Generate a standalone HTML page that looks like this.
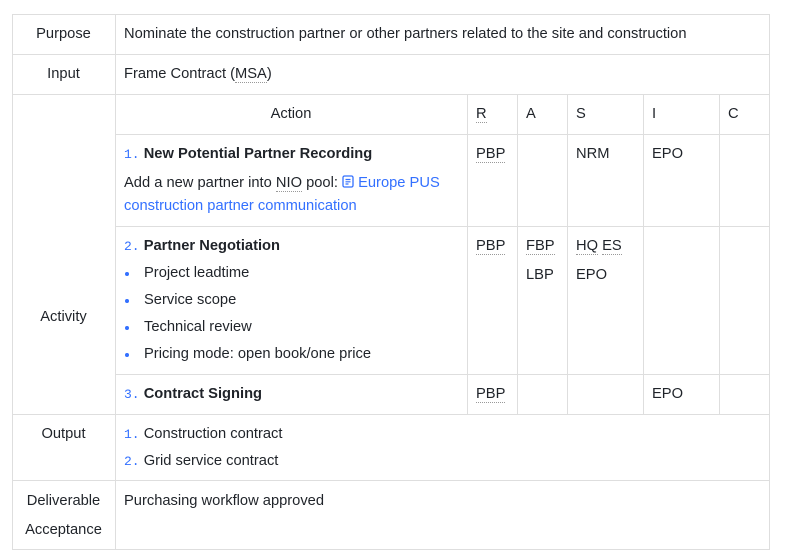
<!DOCTYPE html>
<html><head><meta charset="utf-8"><style>
body{margin:0;width:785px;height:558px;background:#fff;position:relative;overflow:hidden;font-family:"Liberation Sans",Arial,sans-serif;font-size:14.7px;color:#1f2329}
.h{position:absolute;height:1px;background:#dedede}
.v{position:absolute;width:1px;background:#dedede}
.t{position:absolute;white-space:nowrap;line-height:20px;margin-top:1px}
.c{text-align:center}
b{font-weight:bold}
.n{color:#3370ff;font-family:"Liberation Mono",monospace;font-size:13px}
.u{border-bottom:1px dotted #999}
.dot{position:absolute;width:4px;height:4px;border-radius:2px;background:#3370ff}
a{color:#3370ff;text-decoration:none}
</style></head><body>
<div class="h" style="left:12px;width:758px;top:14px"></div>
<div class="h" style="left:12px;width:758px;top:54px"></div>
<div class="h" style="left:12px;width:758px;top:94px"></div>
<div class="h" style="left:115px;width:655px;top:134px"></div>
<div class="h" style="left:115px;width:655px;top:226px"></div>
<div class="h" style="left:115px;width:655px;top:374px"></div>
<div class="h" style="left:12px;width:758px;top:414px"></div>
<div class="h" style="left:12px;width:758px;top:480px"></div>
<div class="h" style="left:12px;width:758px;top:549px"></div>
<div class="v" style="left:12px;top:14px;height:536px"></div>
<div class="v" style="left:115px;top:14px;height:536px"></div>
<div class="v" style="left:769px;top:14px;height:536px"></div>
<div class="v" style="left:467px;top:94px;height:320px"></div>
<div class="v" style="left:517px;top:94px;height:320px"></div>
<div class="v" style="left:567px;top:94px;height:320px"></div>
<div class="v" style="left:643px;top:94px;height:320px"></div>
<div class="v" style="left:719px;top:94px;height:320px"></div>

<div class="t c" style="left:12px;width:103px;top:23px">Purpose</div>
<div class="t" style="left:124px;top:23px">Nominate the construction partner or other partners related to the site and construction</div>
<div class="t c" style="left:12px;width:103px;top:63px">Input</div>
<div class="t" style="left:124px;top:63px">Frame Contract (<span class="u">MSA</span>)</div>
<div class="t c" style="left:115px;width:352px;top:103px">Action</div>
<div class="t" style="left:476px;top:103px"><span class="u">R</span></div>
<div class="t" style="left:526px;top:103px">A</div>
<div class="t" style="left:576px;top:103px">S</div>
<div class="t" style="left:652px;top:103px">I</div>
<div class="t" style="left:728px;top:103px">C</div>

<div class="t" style="left:124px;top:143px"><span class="n">1.</span> <b>New Potential Partner Recording</b></div>
<div class="t" style="left:124px;top:172px">Add a new partner into <span class="u">NIO</span> pool: <a><svg width="12" height="13" viewBox="0 0 12 13" style="vertical-align:-1px"><rect x="1" y="1" width="10" height="11" rx="1.5" fill="none" stroke="#3370ff" stroke-width="1.3"/><path d="M3.5 4.5h5M3.5 6.8h5M3.5 9h3" stroke="#3370ff" stroke-width="1.2"/></svg> Europe PUS</a></div>
<div class="t" style="left:124px;top:195px"><a>construction partner communication</a></div>
<div class="t" style="left:476px;top:143px"><span class="u">PBP</span></div>
<div class="t" style="left:576px;top:143px">NRM</div>
<div class="t" style="left:652px;top:143px">EPO</div>

<div class="t" style="left:124px;top:235px"><span class="n">2.</span> <b>Partner Negotiation</b></div>
<div class="dot" style="left:125px;top:272px"></div><div class="t" style="left:144px;top:262px">Project leadtime</div>
<div class="dot" style="left:125px;top:299px"></div><div class="t" style="left:144px;top:289px">Service scope</div>
<div class="dot" style="left:125px;top:326px"></div><div class="t" style="left:144px;top:316px">Technical review</div>
<div class="dot" style="left:125px;top:353px"></div><div class="t" style="left:144px;top:343px">Pricing mode: open book/one price</div>
<div class="t" style="left:476px;top:235px"><span class="u">PBP</span></div>
<div class="t" style="left:526px;top:235px"><span class="u">FBP</span></div>
<div class="t" style="left:526px;top:264px">LBP</div>
<div class="t" style="left:576px;top:235px"><span class="u">HQ</span> <span class="u">ES</span></div>
<div class="t" style="left:576px;top:264px">EPO</div>
<div class="t c" style="left:12px;width:103px;top:306px">Activity</div>

<div class="t" style="left:124px;top:383px"><span class="n">3.</span> <b>Contract Signing</b></div>
<div class="t" style="left:476px;top:383px"><span class="u">PBP</span></div>
<div class="t" style="left:652px;top:383px">EPO</div>

<div class="t c" style="left:12px;width:103px;top:423px">Output</div>
<div class="t" style="left:124px;top:423px"><span class="n">1.</span> Construction contract</div>
<div class="t" style="left:124px;top:450px"><span class="n">2.</span> Grid service contract</div>

<div class="t c" style="left:12px;width:103px;top:490px">Deliverable</div>
<div class="t c" style="left:12px;width:103px;top:519px">Acceptance</div>
<div class="t" style="left:124px;top:490px">Purchasing workflow approved</div>
</body></html>
